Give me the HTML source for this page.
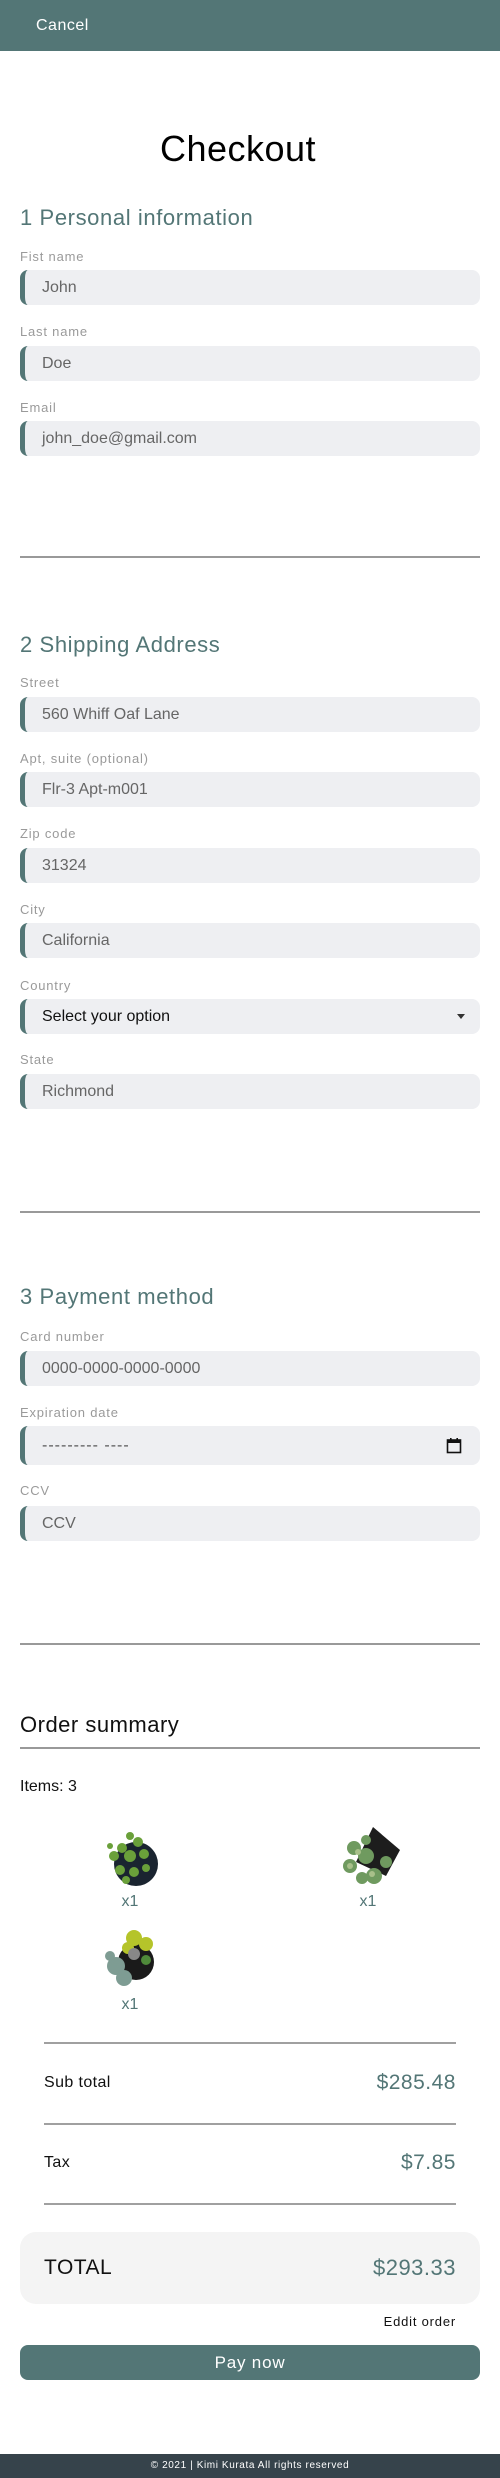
<!DOCTYPE html>
<html><head><meta charset="utf-8"><style>
*{margin:0;padding:0;box-sizing:border-box}
body{width:500px;height:2478px;position:relative;background:#fff;font-family:"Liberation Sans",sans-serif;overflow:hidden}
.a{position:absolute}
.hdr{left:0;top:0;width:500px;height:51px;background:#537676}
.lbl{left:20px;font-size:13px;color:#9a9a9a;letter-spacing:.8px;line-height:16px}
.inp{left:20px;width:460px;height:35px;background:#eeeff2;border-radius:8px;border-left:5px solid #537676;font-size:16px;color:#666;padding-left:17px;line-height:35px}
.h2{left:20px;font-size:22px;color:#537676;letter-spacing:.6px;line-height:26px}
.hr{left:20px;width:460px;height:2px;background:#999}
.hr2{left:44px;width:412px;height:2px;background:#a0a0a0}
.row{left:44px;width:412px;display:flex;justify-content:space-between;align-items:center;height:30px}
.x1{font-size:16px;color:#537676;width:60px;text-align:center}
</style></head><body>
<div class="a hdr"></div>
<div class="a" style="left:36px;top:17px;color:#fff;font-size:16px;letter-spacing:.5px">Cancel</div>
<div class="a" style="left:0;width:476px;text-align:center;top:128px;font-size:36px;letter-spacing:.5px;color:#000">Checkout</div>

<div class="a h2" style="top:205px">1 Personal information</div>
<div class="a lbl" style="top:249px">Fist name</div>
<div class="a inp" style="top:270px">John</div>
<div class="a lbl" style="top:324px">Last name</div>
<div class="a inp" style="top:346px">Doe</div>
<div class="a lbl" style="top:400px">Email</div>
<div class="a inp" style="top:421px">john_doe@gmail.com</div>
<div class="a hr" style="top:556px"></div>

<div class="a h2" style="top:632px">2 Shipping Address</div>
<div class="a lbl" style="top:675px">Street</div>
<div class="a inp" style="top:697px">560 Whiff Oaf Lane</div>
<div class="a lbl" style="top:751px">Apt, suite (optional)</div>
<div class="a inp" style="top:772px">Flr-3 Apt-m001</div>
<div class="a lbl" style="top:826px">Zip code</div>
<div class="a inp" style="top:848px">31324</div>
<div class="a lbl" style="top:902px">City</div>
<div class="a inp" style="top:923px">California</div>
<div class="a lbl" style="top:978px">Country</div>
<div class="a inp" style="top:999px;color:#111">Select your option<span class="a" style="right:15px;top:15px;width:0;height:0;border-left:4px solid transparent;border-right:4px solid transparent;border-top:5px solid #333"></span></div>
<div class="a lbl" style="top:1052px">State</div>
<div class="a inp" style="top:1074px">Richmond</div>
<div class="a hr" style="top:1211px"></div>

<div class="a h2" style="top:1284px">3 Payment method</div>
<div class="a lbl" style="top:1329px">Card number</div>
<div class="a inp" style="top:1351px">0000-0000-0000-0000</div>
<div class="a lbl" style="top:1405px">Expiration date</div>
<div class="a inp" style="top:1426px;height:39px;line-height:39px;color:#555;letter-spacing:1px">--------- ----
<svg class="a" style="right:18px;top:11px" width="16" height="17" viewBox="0 0 16 17"><rect x="1.5" y="3" width="13" height="12.5" fill="none" stroke="#111" stroke-width="1.6"/><rect x="1.5" y="3" width="13" height="3" fill="#111"/><rect x="4" y="1" width="1.6" height="3" fill="#111"/><rect x="10.4" y="1" width="1.6" height="3" fill="#111"/></svg></div>
<div class="a lbl" style="top:1483px">CCV</div>
<div class="a inp" style="top:1506px">CCV</div>
<div class="a hr" style="top:1643px"></div>

<div class="a" style="left:20px;top:1712px;font-size:22px;color:#111;letter-spacing:.5px">Order summary</div>
<div class="a hr" style="top:1747px"></div>
<div class="a" style="left:20px;top:1778px;font-size:16px;color:#111">Items: 3</div>

<svg class="a" style="left:100px;top:1826px" width="62" height="62" viewBox="0 0 62 62"><circle cx="36" cy="38" r="22" fill="#1a2430"/><g fill="#6aa03a"><circle cx="30" cy="10" r="4"/><circle cx="38" cy="16" r="5"/><circle cx="22" cy="22" r="5"/><circle cx="14" cy="30" r="5"/><circle cx="30" cy="30" r="6"/><circle cx="44" cy="28" r="5"/><circle cx="20" cy="44" r="5"/><circle cx="34" cy="46" r="5"/><circle cx="46" cy="42" r="4"/><circle cx="10" cy="20" r="3"/><circle cx="26" cy="54" r="4"/></g></svg>
<div class="a x1" style="left:100px;top:1893px">x1</div>

<svg class="a" style="left:336px;top:1826px" width="66" height="62" viewBox="0 0 66 62"><path d="M37 1 L64 24 L50 50 L20 36 Z" fill="#1d1d1d"/><g fill="#6f9a5f"><circle cx="18" cy="22" r="7"/><circle cx="30" cy="30" r="8"/><circle cx="14" cy="40" r="7"/><circle cx="38" cy="50" r="8"/><circle cx="50" cy="36" r="6"/><circle cx="30" cy="14" r="5"/><circle cx="26" cy="52" r="6"/></g><g fill="#a8c08a"><circle cx="22" cy="26" r="3"/><circle cx="36" cy="48" r="3"/><circle cx="14" cy="40" r="3"/></g></svg>
<div class="a x1" style="left:338px;top:1893px">x1</div>

<svg class="a" style="left:100px;top:1928px" width="62" height="64" viewBox="0 0 62 64"><circle cx="36" cy="34" r="18" fill="#1a1a1a"/><g fill="#b5c42a"><circle cx="34" cy="10" r="8"/><circle cx="46" cy="16" r="7"/><circle cx="28" cy="20" r="6"/></g><g fill="#7e9c93"><circle cx="16" cy="38" r="9"/><circle cx="24" cy="50" r="8"/><circle cx="10" cy="28" r="5"/></g><circle cx="34" cy="26" r="6" fill="#888"/><circle cx="46" cy="32" r="5" fill="#4f8a3a"/></svg>
<div class="a x1" style="left:100px;top:1996px">x1</div>

<div class="a hr2" style="top:2042px"></div>
<div class="a row" style="top:2068px"><span style="font-size:16px;color:#111;letter-spacing:.4px">Sub total</span><span style="font-size:21px;color:#537676;letter-spacing:.5px">$285.48</span></div>
<div class="a hr2" style="top:2123px"></div>
<div class="a row" style="top:2148px"><span style="font-size:16px;color:#111;letter-spacing:.4px">Tax</span><span style="font-size:21px;color:#537676;letter-spacing:.5px">$7.85</span></div>
<div class="a hr2" style="top:2203px"></div>
<div class="a" style="left:20px;top:2232px;width:460px;height:72px;background:#f4f4f4;border-radius:16px"></div>
<div class="a row" style="top:2253px"><span style="font-size:21px;color:#111;letter-spacing:.5px">TOTAL</span><span style="font-size:22px;color:#537676;letter-spacing:.5px">$293.33</span></div>
<div class="a" style="right:44px;top:2314px;font-size:13px;color:#111;letter-spacing:.8px">Eddit order</div>
<div class="a" style="left:20px;top:2345px;width:460px;height:35px;background:#537676;border-radius:8px;color:#fff;font-size:17px;text-align:center;line-height:35px;letter-spacing:.8px">Pay now</div>
<div class="a" style="left:0;top:2454px;width:500px;height:24px;background:#36434b;color:#fff;font-size:10px;text-align:center;line-height:24px;letter-spacing:.6px">© 2021 | Kimi Kurata All rights reserved</div>
</body></html>
